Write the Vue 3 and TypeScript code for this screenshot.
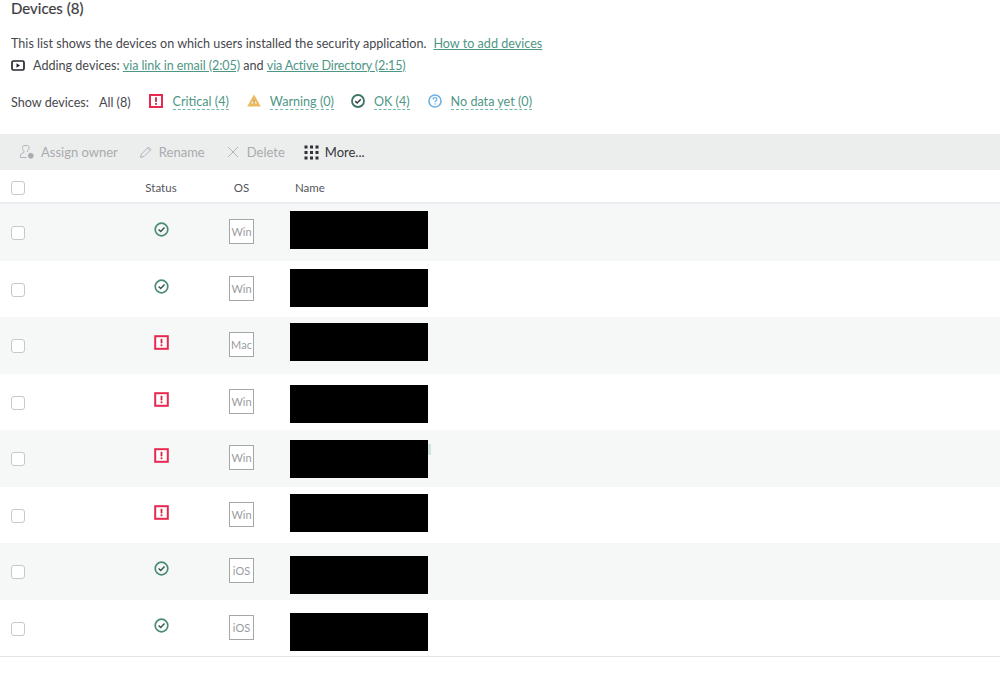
<script setup lang="ts">
interface Device { status: 'ok' | 'critical'; os: string; nameTop: number; trail?: boolean }
const devices: Device[] = [
  { status: 'ok', os: 'Win', nameTop: 7 },
  { status: 'ok', os: 'Win', nameTop: 8 },
  { status: 'critical', os: 'Mac', nameTop: 6 },
  { status: 'critical', os: 'Win', nameTop: 11 },
  { status: 'critical', os: 'Win', nameTop: 10, trail: true },
  { status: 'critical', os: 'Win', nameTop: 7 },
  { status: 'ok', os: 'iOS', nameTop: 13 },
  { status: 'ok', os: 'iOS', nameTop: 13 },
]
</script>

<template>
  <div class="page">
    <h1 class="title">Devices (8)</h1>
    <p class="line intro">This list shows the devices on which users installed the security application.<a class="link how">How to add devices</a></p>
    <p class="line video">
      <svg class="play" width="14" height="11" viewBox="0 0 14 11"><rect x="1" y="1" width="12" height="9" rx="1.5" fill="none" stroke="#26262e" stroke-width="1.7"/><path d="M5.5 3.2 9 5.5 5.5 7.8z" fill="#26262e"/></svg>
      <span>Adding devices: <a class="link email">via link in email (2:05)</a> and <a class="link ad">via Active Directory (2:15)</a></span>
    </p>
    <div class="filters">
      <span class="show">Show devices:</span>
      <span class="all">All (8)</span>
      <span class="filter f-critical">
        <svg width="14" height="14" viewBox="0 0 14 14"><rect x="1" y="1" width="12" height="12" fill="#fff" stroke="#e8294f" stroke-width="2"/><rect x="6.1" y="3.3" width="1.8" height="4.6" fill="#c8243f"/><rect x="6.1" y="9" width="1.8" height="1.8" fill="#c8243f"/></svg>
        <span class="dashed">Critical (4)</span>
      </span>
      <span class="filter f-warning">
        <svg width="14" height="13" viewBox="0 0 14 13"><path d="M7 .5 13.8 12.500H.2z" fill="#edb95e"/><path d="M7 4.6 10 10H4z" fill="#f7e3ba"/><rect x="6.4" y="5.4" width="1.2" height="2.8" fill="#b98a33"/><rect x="6.4" y="8.8" width="1.2" height="1.2" fill="#b98a33"/></svg>
        <span class="dashed">Warning (0)</span>
      </span>
      <span class="filter f-ok">
        <svg width="14" height="14" viewBox="0 0 14 14"><circle cx="7" cy="7" r="6" fill="none" stroke="#3c7568" stroke-width="1.8"/><path d="M4.2 7.1 6.2 9l3.6-3.8" fill="none" stroke="#2f3f3b" stroke-width="1.5"/></svg>
        <span class="dashed">OK (4)</span>
      </span>
      <span class="filter f-nodata">
        <svg width="14" height="14" viewBox="0 0 15 15"><circle cx="7.5" cy="7.5" r="6.5" fill="none" stroke="#6fb0e4" stroke-width="1.7"/><path d="M5.5 5.8c0-1.2 1-1.9 2-1.9s2 .7 2 1.8c0 1.5-2 1.5-2 3.2" fill="none" stroke="#6fb0e4" stroke-width="1.4"/><rect x="6.9" y="10" width="1.3" height="1.3" fill="#6fb0e4"/></svg>
        <span class="dashed">No data yet (0)</span>
      </span>
    </div>

    <div class="toolbar">
      <span class="tool disabled t-assign">
        <svg width="16" height="16" viewBox="0 0 16 16" fill="none" stroke="#b3b5b8" stroke-width="1"><path d="M5 1.500h3.500c.8 0 1.500.7 1.500 1.500v1.500c0 1.200-.8 2-1.500 2.400v1.200"/><path d="M5 1.500C4 1.800 3.500 2.600 3.500 3.500v1c0 1.200.7 2 1.500 2.400v1.400L1.500 10.500v3h6"/><circle cx="11.800" cy="11.800" r="2.500" fill="#a9abae"/></svg>
        Assign owner
      </span>
      <span class="tool disabled t-rename">
        <svg width="14" height="14" viewBox="0 0 14 14" fill="none" stroke="#b3b5b8" stroke-width="1"><path d="M1.500 12.500 2.500 9l7-7 2.500 2.500-7 7z"/><path d="M8.500 3l2.500 2.500"/></svg>
        Rename
      </span>
      <span class="tool disabled t-delete">
        <svg width="12" height="12" viewBox="0 0 12 12" fill="none" stroke="#b3b5b8" stroke-width="1"><path d="M1 1l10 10M11 1 1 11"/></svg>
        Delete
      </span>
      <span class="tool t-more">
        <svg width="15" height="15" viewBox="0 0 15 15" fill="#2f2f36"><rect x="0.5" y="0.5" width="3" height="3"/><rect x="6" y="0.5" width="3" height="3"/><rect x="11.5" y="0.5" width="3" height="3"/><rect x="0.5" y="6" width="3" height="3"/><rect x="6" y="6" width="3" height="3"/><rect x="11.5" y="6" width="3" height="3"/><rect x="0.5" y="11.5" width="3" height="3"/><rect x="6" y="11.5" width="3" height="3"/><rect x="11.5" y="11.5" width="3" height="3"/></svg>
        More...
      </span>
    </div>

    <div class="grid-row head">
      <span class="check"></span>
      <span class="c-status">Status</span>
      <span class="c-os">OS</span>
      <span class="c-name">Name</span>
    </div>

    <div class="rows">
      <div v-for="(d, i) in devices" :key="i" class="grid-row row" :class="{ odd: i % 2 === 0 }">
        <span class="check"></span>
        <span class="c-status">
          <svg v-if="d.status === 'ok'" class="status" width="15" height="15" viewBox="0 0 15 15"><circle cx="7.5" cy="7.5" r="6.3" fill="none" stroke="#4a8b7a" stroke-width="1.7"/><path d="M4.6 7.6 6.700 9.600l3.800-4" fill="none" stroke="#33554c" stroke-width="1.4"/></svg>
          <svg v-else class="status" width="15" height="15" viewBox="0 0 15 15"><rect x="1.200" y="1.200" width="12.600" height="12.600" fill="#fff" stroke="#e8294f" stroke-width="2"/><rect x="6.600" y="3.800" width="1.800" height="4.600" fill="#d0233f"/><rect x="6.600" y="9.400" width="1.800" height="1.800" fill="#d0233f"/></svg>
        </span>
        <span class="c-os"><span class="os">{{ d.os }}</span></span>
        <span class="c-name">
          <span class="redacted" :style="{ marginTop: d.nameTop + 'px' }"></span>
          <span v-if="d.trail" class="trail"></span>
        </span>
      </div>
    </div>
  </div>
</template>

<style>
html, body { margin: 0; background: #fff; }
</style>

<style scoped>
.page {
  width: 1000px;
  height: 675px;
  overflow: hidden;
  background: #fff;
  font-family: Lato, "Open Sans", sans-serif;
  font-size: 12.6px;
  color: #47484e;
}
.title {
  margin: 0;
  padding: 0 0 0 11px;
  height: 36px;
  line-height: 17px;
  font-size: 15px;
  font-weight: 400;
  color: #3d3d42;
  -webkit-text-stroke: 0.2px #3d3d42;
}
.line {
  margin: 0;
  padding-left: 11px;
  line-height: 16px;
}
.intro { height: 21px; display: flex; align-items: flex-start; }
.how { margin-left: 7px; color: #5fae9c; text-decoration-color: #5fae9c; }
.video { height: 17px; display: flex; align-items: center; gap: 8px; }
.play { flex: none; }
.link { color: #4f9685; text-decoration: underline; }
.email { letter-spacing: -0.08px; }
.ad { letter-spacing: -0.18px; }
.filters {
  display: flex;
  align-items: center;
  padding: 20px 0 0 11px;
  height: 17px;
}
.all { margin-left: 10px; }
.filter { display: inline-flex; align-items: center; gap: 10px; }
.filter svg { margin-top: -4px; }
.f-critical { margin-left: 18px; }
.f-warning { margin-left: 18px; gap: 9px; }
.f-ok { margin-left: 17px; gap: 9px; }
.f-nodata { margin-left: 18px; gap: 9px; }
.dashed { color: #4f9685; border-bottom: 1px dashed #6fb8a5; line-height: 14px; }
.toolbar {
  margin-top: 23px;
  height: 36px;
  background: #eceded;
  display: flex;
  align-items: center;
  padding-left: 19px;
  font-size: 13px;
}
.tool { display: inline-flex; align-items: center; gap: 6px; }
.disabled { color: #a9abae; }
.t-rename { margin-left: 21px; }
.t-delete { margin-left: 22px; gap: 8px; }
.t-more { margin-left: 19px; color: #36363c; gap: 6px; }
.grid-row {
  display: grid;
  grid-template-columns: 125px 50px 111px 1fr;
  padding-left: 11px;
}
.head {
  height: 32px;
  align-items: center;
  border-bottom: 2px solid #e9eef1;
  font-size: 11.5px;
  color: #55565c;
}
.head > * { position: relative; top: 1px; }
.head .check { top: 2px; }
.head .c-status, .head .c-os { text-align: center; }
.head .c-name { margin-left: -2px; }
.rows { border-bottom: 1px solid #dfe5e9; width: 100%; }
.row { height: 56.5px; }
.row.odd { background: #f6f8f8; }
.check {
  width: 12px;
  height: 12px;
  border: 1px solid #c6c8ca;
  border-radius: 3px;
  background: #fff;
  align-self: center;
}
.row .check { margin-top: 1.5px; }
.row .c-status { padding-top: 18px; }
.status { display: block; margin: 0 auto; }
.row .c-os { padding-top: 15px; display: flex; justify-content: center; align-items: flex-start; }
.os {
  box-sizing: border-box;
  width: 25px;
  height: 25px;
  border: 1px solid #a4a7aa;
  background: #fff;
  font-size: 11px;
  line-height: 24px;
  text-align: center;
  color: #9a9ca0;
  overflow: hidden;
}
.c-name { display: block; margin-left: -7px; position: relative; }
.redacted { display: block; width: 138px; height: 38px; background: #000; }
.trail { position: absolute; left: 138px; top: 14px; width: 3px; height: 11px; background: #cfe6e0; }
</style>
